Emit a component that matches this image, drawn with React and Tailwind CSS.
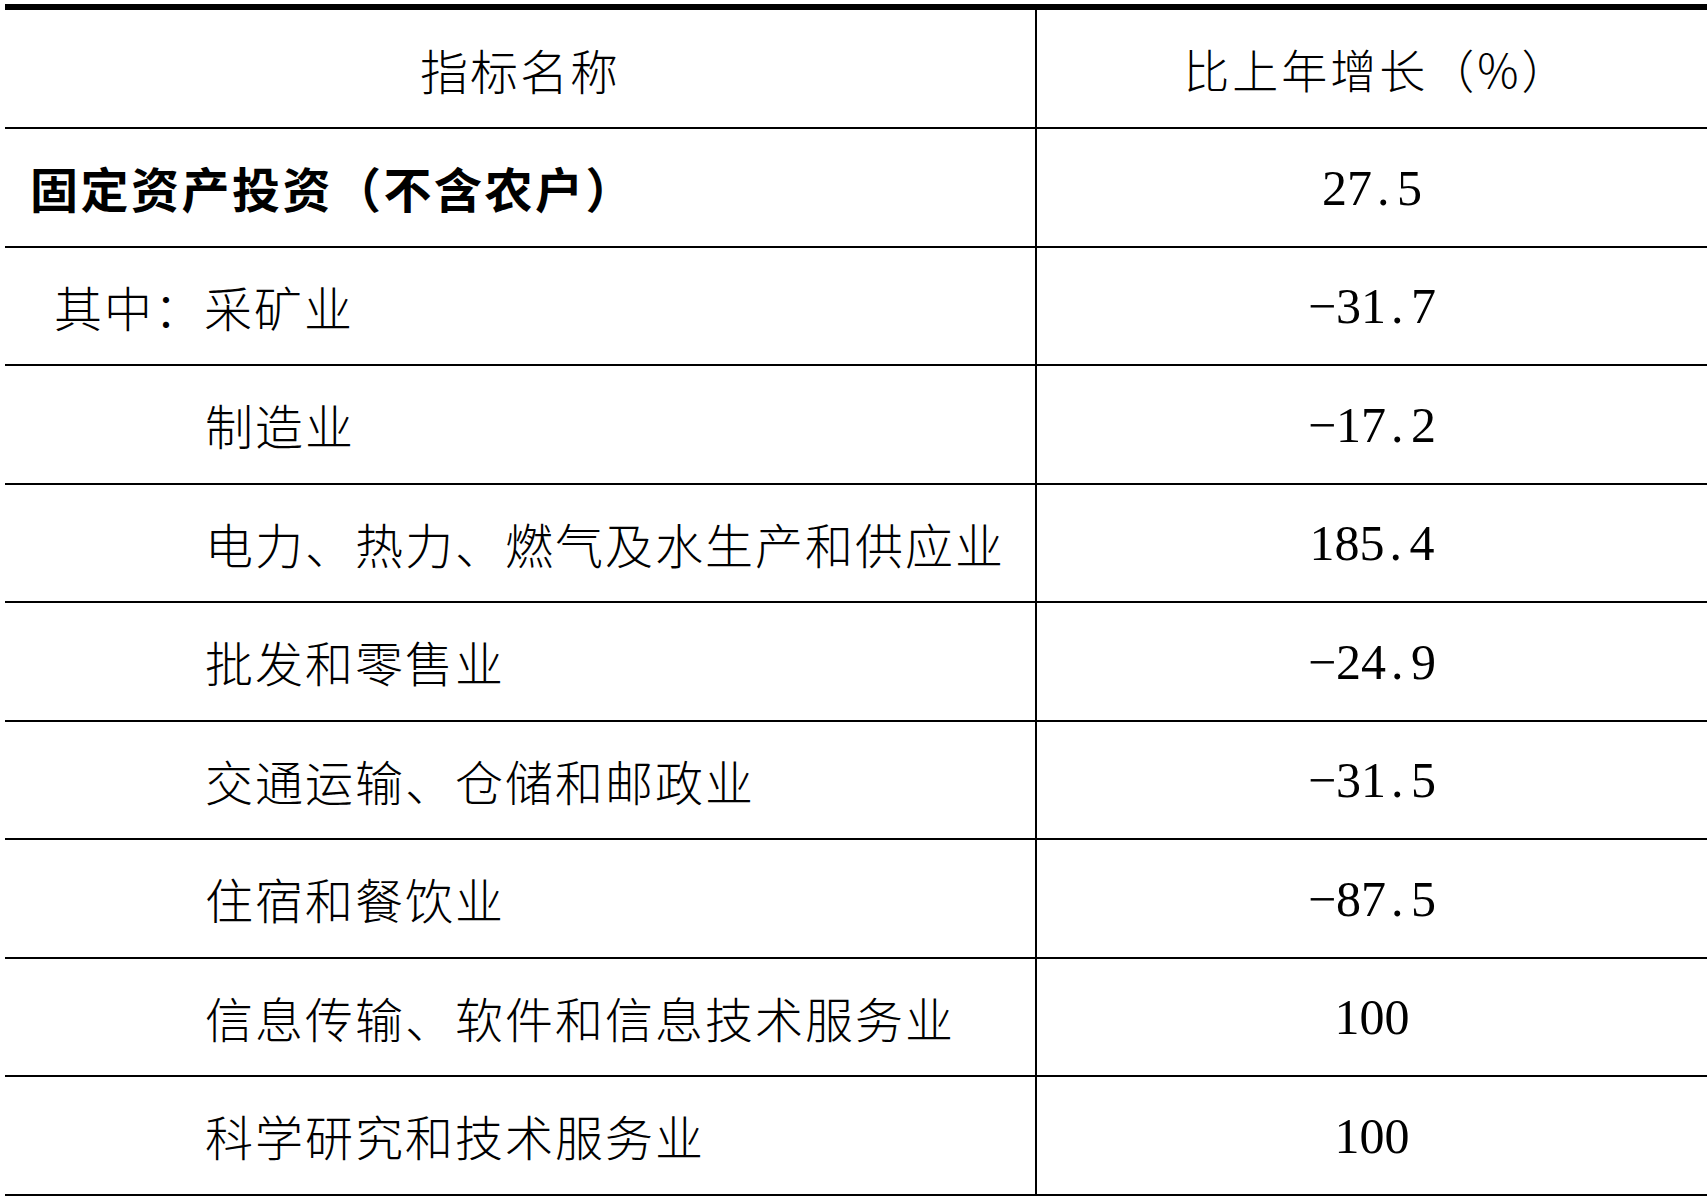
const rows = [
  { name: "固定资产投资（不含农户）", value: "27.5", bold: true, pad: "pl-[25px] tracking-[2.5px]" },
  { name: "其中：采矿业", value: "−31.7", pad: "pl-[49px] tracking-[2px]" },
  { name: "制造业", value: "−17.2", pad: "pl-[200px] tracking-[2px]" },
  { name: "电力、热力、燃气及水生产和供应业", value: "185.4", pad: "pl-[200px] tracking-[2px]" },
  { name: "批发和零售业", value: "−24.9", pad: "pl-[200px] tracking-[2px]" },
  { name: "交通运输、仓储和邮政业", value: "−31.5", pad: "pl-[200px] tracking-[2px]" },
  { name: "住宿和餐饮业", value: "−87.5", pad: "pl-[200px] tracking-[2px]" },
  { name: "信息传输、软件和信息技术服务业", value: "100", pad: "pl-[200px] tracking-[2px]" },
  { name: "科学研究和技术服务业", value: "100", pad: "pl-[200px] tracking-[2px]" },
];

function Num({ v }) {
  const parts = v.split(".");
  if (parts.length === 1) return <span>{v}</span>;
  return (
    <span>
      {parts[0]}
      <span className="inline-block w-[25px] pl-[5px] text-left">.</span>
      {parts[1]}
    </span>
  );
}

const cjk = "font-['Noto_Sans_CJK_SC',sans-serif]";
const num = "font-['Liberation_Serif','Noto_Sans_CJK_SC',serif]";

export default function App() {
  return (
    <div className="w-[1707px] h-[1197px] bg-white overflow-hidden pl-[5px] pt-[4px] text-black">
      <div className="border-t-[6px] border-black">
        <div className="flex h-[119px] border-b-2 border-black">
          <div className={`w-[1032px] shrink-0 border-r-2 border-black flex items-center justify-center text-[48px] tracking-[2px] font-light ${cjk}`}>
            指标名称
          </div>
          <div className={`flex-1 flex items-center justify-center pl-[10px] text-[46px] tracking-[3px] font-light ${cjk}`}>
            比上年增长（%）
          </div>
        </div>
        {rows.map((r, i) => (
          <div key={i} className="flex h-[118.5px] border-b-2 border-black">
            <div
              className={`w-[1032px] shrink-0 border-r-2 border-black flex items-center ${r.pad} text-[48px] whitespace-nowrap ${
                r.bold ? "font-bold" : "font-light"
              } ${cjk}`}
            >
              {r.name}
            </div>
            <div className={`flex-1 flex items-center justify-center pt-[2px] text-[50px] ${num}`}>
              <Num v={r.value} />
            </div>
          </div>
        ))}
      </div>
    </div>
  );
}
